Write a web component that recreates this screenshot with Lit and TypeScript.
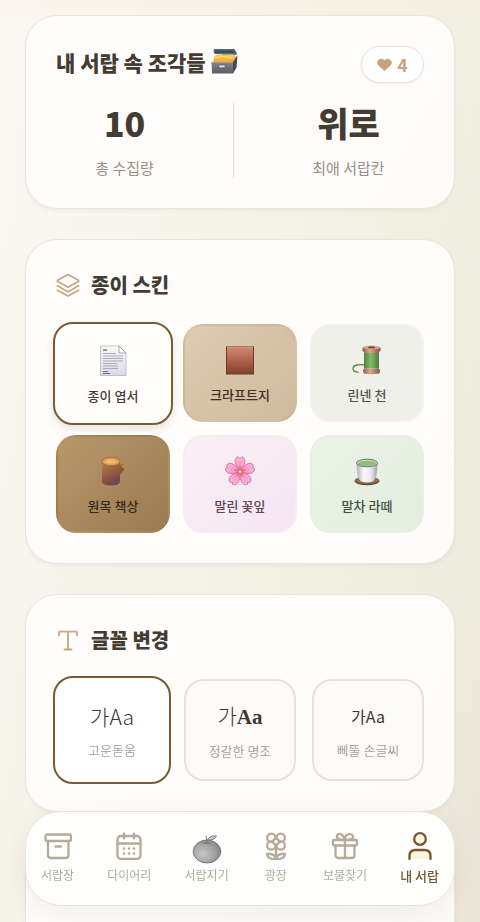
import { LitElement, html, css, svg } from "lit";
import { customElement, state } from "lit/decorators.js";
import { classMap } from "lit/directives/class-map.js";

const drawer = svg`
  <defs>
    <linearGradient id="d1" x1="0" y1="0" x2="0" y2="1"><stop offset="0" stop-color="#85858f"/><stop offset="1" stop-color="#5b5c65"/></linearGradient>
    <linearGradient id="d2" x1="0" y1="0" x2="0" y2="1"><stop offset="0" stop-color="#fbc95c"/><stop offset="1" stop-color="#f5a52b"/></linearGradient>
  </defs>
  <path d="M3 1h20.500L26 5.500 25 7 4 6 2.500 4.500z" fill="#526a7c"/>
  <path d="M4 2.500h19l1.500 2.500H4z" fill="#3c4c5a"/>
  <path d="M3.500 8L6 6.500h17L25 9l-2 6H2z" fill="url(#d2)"/>
  <path d="M4 9.500q8-2 18 0" fill="none" stroke="#ffe09a" stroke-width=".8"/>
  <path d="M11 7l2-1.200h4L18 7z" fill="#86b04b"/>
  <path d="M26.500 7l-1 12.500-3.500 6V14z" fill="#45464f"/>
  <path d="M.5 14H22v11.500H1z" fill="url(#d1)"/>
  <path d="M.5 14.300H22" stroke="#a4a5ad"/>
  <rect x="8" y="17" width="6" height="2.800" rx=".6" fill="#e8e8ec" stroke="#45464f" stroke-width=".6"/>`;

const paper = svg`
  <defs><linearGradient id="p1" x1="0" y1="0" x2="0" y2="1"><stop offset="0" stop-color="#fafafc"/><stop offset="1" stop-color="#d9d9e6"/></linearGradient></defs>
  <path d="M3.500 1h18.500l7 7v22.500h-25.500z" fill="url(#p1)" stroke="#b4b4c4" stroke-width=".8"/>
  <path d="M22 1v7h7z" fill="#fff" stroke="#9595a5" stroke-width=".8"/>
  <path d="M6 5h4" stroke="#555564" stroke-width="1.200"/>
  <path d="M6 8.500h13M6 11h20M6 13.500h20M6 16h20M6 18.500h14M6 21h15M6 23.500h15" stroke="#a2a2b0" stroke-width=".9"/>
  <path d="M6 26.500h5M6 28.500h7" stroke="#6d6d9b" stroke-width="1"/>`;

const kraft = svg`
  <defs><linearGradient id="k1" x1="0" y1="0" x2="0" y2="1"><stop offset="0" stop-color="#d08c73"/><stop offset=".4" stop-color="#b36a50"/><stop offset="1" stop-color="#80402c"/></linearGradient></defs>
  <rect x="2.500" y="3" width="27" height="27" fill="url(#k1)" stroke="#6f3a2a"/>
  <path d="M3 3.500h26" stroke="#eab49c" stroke-width=".6"/>`;

const thread = svg`
  <defs>
    <linearGradient id="t1"><stop offset="0" stop-color="#8c5a45"/><stop offset=".4" stop-color="#dca78d"/><stop offset="1" stop-color="#8a5541"/></linearGradient>
    <linearGradient id="t2"><stop offset="0" stop-color="#4f8040"/><stop offset=".45" stop-color="#86bc6b"/><stop offset="1" stop-color="#4a7c3a"/></linearGradient>
  </defs>
  <path d="M14 21C8 20 2.500 21 2 24c-.4 2.500 2 4.500 5.500 4" fill="none" stroke="#558a48" stroke-width="1.300"/>
  <path d="M13 24.500h15l1.300 2.500-1 2.500q-8 1.500-15.500 0L12 27z" fill="url(#t1)"/>
  <rect x="13" y="8" width="15" height="16.500" fill="url(#t2)"/>
  <path d="M11.500 3.500h18v3l-2 2.500H13.500l-2-2.500z" fill="url(#t1)"/>
  <ellipse cx="20.500" cy="3.500" rx="9" ry="1.900" fill="#d8a48d"/>
  <ellipse cx="20.500" cy="3.400" rx="3.500" ry=".9" fill="#644136"/>`;

const wood = svg`
  <defs><linearGradient id="w1" x1="0" y1="0" x2=".4" y2="1"><stop offset="0" stop-color="#b98048"/><stop offset=".5" stop-color="#9a6240"/><stop offset="1" stop-color="#74434e"/></linearGradient></defs>
  <path d="M20 16l3-6q3-2 4.500 1l-.5 4-5 6z" fill="#8a5733"/>
  <ellipse cx="26" cy="11.500" rx="1.900" ry="1.300" fill="#c98643" transform="rotate(30 26 11.500)"/>
  <path d="M5 6v21q1 3.500 9 3.500t9-3.500V6z" fill="url(#w1)"/>
  <ellipse cx="14" cy="6.500" rx="9" ry="4.200" fill="#e0a052" stroke="#a06c36" stroke-width=".9"/>
  <ellipse cx="14" cy="6.500" rx="5.500" ry="2" fill="#f0bb6c"/>`;

const petal = "M16 16.500C13.500 13.500 9.800 8 11.500 4q1-2.200 3-2.200l1.500 1.700 1.500-1.700q2 0 3 2.200C22.200 8 18.500 13.500 16 16.500z";
const blossom = svg`
  <defs><radialGradient id="b1" gradientUnits="userSpaceOnUse" cx="16" cy="16.500" r="15"><stop offset="0" stop-color="#ee5f9a"/><stop offset=".4" stop-color="#f99bc8"/><stop offset="1" stop-color="#fcb4dc"/></radialGradient></defs>
  ${[0, 72, 144, 216, 288].map(
    (a) => svg`<g transform="rotate(${a} 16 16.500)"><path d=${petal} fill="url(#b1)" stroke="#c9608f" stroke-width=".7"/><path d="M16 14v-3.500" stroke="#d9447f" stroke-width=".7"/></g>`
  )}
  <circle cx="16" cy="16.500" r="1.900" fill="#f7d78a" stroke="#b5503e" stroke-width=".6"/>`;

const tea = svg`
  <defs><linearGradient id="c1"><stop offset="0" stop-color="#a9aab4"/><stop offset=".35" stop-color="#fafafc"/><stop offset=".7" stop-color="#e6e6ee"/><stop offset="1" stop-color="#9b9caa"/></linearGradient></defs>
  <ellipse cx="16" cy="26" rx="12.500" ry="4.200" fill="#6b4637"/>
  <ellipse cx="16" cy="25.300" rx="12" ry="3.500" fill="#966852"/>
  <path d="M5.500 8l.5 8q.5 8 4 10.500 6 2 12 0Q25.500 24 26 16l.5-8z" fill="url(#c1)"/>
  <ellipse cx="16" cy="8" rx="10.500" ry="3.800" fill="#cfd6cf" stroke="#5f6b64" stroke-width=".9"/>
  <ellipse cx="16" cy="8.500" rx="9" ry="2.800" fill="#8dbf74"/>`;

const layers = svg`<g fill="none" stroke="currentColor" stroke-width="1.700" stroke-linejoin="round" stroke-linecap="round">
  <path d="M12 1.500 22.500 7.300q.6.500 0 1L12 14.200 1.500 8.300q-.6-.5 0-1z"/>
  <path d="M1.200 12.800 12 18.700l10.800-5.900M1.200 17.300 12 23l10.800-5.700"/></g>`;

const typeIcon = svg`<g fill="none" stroke="currentColor" stroke-width="1.800" stroke-linejoin="round" stroke-linecap="round">
  <path d="M3 7.500V5q0-1.300 1.300-1.300h15.400Q21 3.700 21 5v2.500M12 3.700v17.600M8.500 21.500h7"/></g>`;

const archive = svg`<rect x="1.500" y="2.500" width="25.500" height="6.500" rx="1.500"/><path d="M4 9v14q0 3 3 3h14.500q3 0 3-3V9M11.500 14.500h5.500"/>`;
const calendar = svg`<rect x="2.500" y="4" width="23" height="23" rx="3.500"/><path d="M2.500 11.500h23M9 1.500v5M19 1.500v5"/>
  <g fill="currentColor" stroke="none"><circle cx="9" cy="16.500" r="1.300"/><circle cx="14" cy="16.500" r="1.300"/><circle cx="19" cy="16.500" r="1.300"/><circle cx="9" cy="21.500" r="1.300"/><circle cx="14" cy="21.500" r="1.300"/><circle cx="19" cy="21.500" r="1.300"/></g>`;
const tangerine = svg`
  <defs><radialGradient id="o1" cx=".35" cy=".6" r=".7"><stop offset="0" stop-color="#c8c8c8"/><stop offset=".6" stop-color="#a2a2a2"/><stop offset="1" stop-color="#848484"/></radialGradient></defs>
  <g class="fine">
  <ellipse cx="15" cy="19.500" rx="13.800" ry="11.500" fill="url(#o1)" stroke="#747474"/>
  <path d="M14.500 11q.5-4-.5-7" fill="none" stroke="#707070"/>
  <path d="M15.500 8q2-5 9-4-2 4.500-9 4z" fill="#c9c9c9" stroke="#777"/>
  <path d="M11.500 11q3 1 6.500 0" fill="none" stroke="#6c6c6c"/></g>`;
const flower = svg`<circle cx="9.300" cy="5.800" r="4.200"/><circle cx="18.700" cy="5.800" r="4.200"/><circle cx="9.300" cy="13.500" r="4.200"/><circle cx="18.700" cy="13.500" r="4.200"/>
  <circle cx="14" cy="9.700" r="2.800" fill="#fff"/><path d="M14 16.500V27M14 27c-1-4-5-5.500-9-5.200 0 3.700 4 5.700 9 5.200 5 .5 9-1.500 9-5.200-4-.3-8 1.200-9 5.200"/>`;
const gift = svg`<rect x="2" y="8" width="24" height="5.500" rx="1.300"/><path d="M4.500 13.500V23q0 3 3 3h13q3 0 3-3v-9.500M14 8v18M14 8C8 8 5.500 6.500 6 4c.5-2.700 4-2.500 5.500-.7Q13.500 5.500 14 8c0-3 1.500-5.500 3.500-5.800C20 1.700 22 3 22 4.800 22 7.300 19 8 14 8"/>`;
const user = svg`<circle cx="14" cy="7" r="5.800" fill="#fff3e2"/><path d="M3.500 27v-3q0-6 6-6h9q6 0 6 6v3" fill="#fff3e2"/>`;

const SKINS = [
  { id: "postcard", label: "종이 엽서", art: paper },
  { id: "kraft", label: "크라프트지", art: kraft },
  { id: "linen", label: "린넨 천", art: thread },
  { id: "desk", label: "원목 책상", art: wood },
  { id: "petal", label: "말린 꽃잎", art: blossom },
  { id: "matcha", label: "말차 라떼", art: tea },
];
const FONTS = [
  { id: "gowun", label: "고운돋움" },
  { id: "myeongjo", label: "정갈한 명조" },
  { id: "hand", label: "삐뚤 손글씨" },
];
const TABS = [
  { id: "shelf", label: "서랍장", art: archive },
  { id: "diary", label: "다이어리", art: calendar },
  { id: "keeper", label: "서랍지기", art: tangerine },
  { id: "plaza", label: "광장", art: flower },
  { id: "treasure", label: "보물찾기", art: gift },
  { id: "mine", label: "내 서랍", art: user },
];

@customElement("app-root")
export class AppRoot extends LitElement {
  @state() skin = "postcard";
  @state() font = "gowun";

  static styles = css`
    :host {
      display: block;
      height: 100vh;
      font-family: "Noto Sans CJK KR", "Noto Sans", sans-serif;
      color: #443c32;
      background:
        linear-gradient(180deg, rgba(255, 236, 216, 0.25), rgba(255, 236, 216, 0) 24px),
        linear-gradient(105deg, #faf9f4 0%, #f4f1e6 50%, #eeebdf 85%, #ebe5d9 100%);
    }
    * { box-sizing: border-box; }
    main {
      height: 100%;
      overflow-y: auto;
      scrollbar-width: none;
      padding: 15px 25px 0;
      display: flex;
      flex-direction: column;
      gap: 30px;
    }
    .card {
      flex: none;
      padding: 30px;
      border: 1px solid #e9e5dd;
      border-radius: 32px;
      background: linear-gradient(120deg, #fffefd, #fdfcfa);
      box-shadow: 0 2px 4px rgba(110, 90, 60, 0.06);
    }
    .more { min-height: 160px; }
    .top { display: flex; justify-content: space-between; align-items: center; height: 37px; }
    h1, h2, p { margin: 0; }
    h1, h2 {
      display: flex;
      align-items: center;
      font-weight: 900;
      line-height: 30px;
    }
    h1 { gap: 5px; font-size: 21px; padding-bottom: 6px; }
    h2 { gap: 11px; font-size: 20px; margin-bottom: 24px; }
    .drawer { width: 28px; height: 28px; }
    .mark { width: 24px; height: 24px; color: #c9a67c; }
    .likes {
      display: flex;
      align-items: center;
      justify-content: center;
      gap: 5px;
      width: 63px;
      height: 37px;
      border: 1px solid #e6e2dc;
      border-radius: 20px;
      background: #fff;
      color: #c8a27a;
      font-size: 17px;
      font-weight: 700;
      line-height: 20px;
      box-shadow: 0 1px 2px rgba(110, 90, 60, 0.08);
    }
    .heart { width: 15px; height: 15px; }
    .stats { display: flex; justify-content: space-around; margin-top: 20px; height: 75px; }
    .stat { display: flex; flex-direction: column; align-items: center; gap: 15px; }
    .value { font-size: 34px; font-weight: 900; line-height: 40px; }
    .caption { font-size: 15px; line-height: 20px; color: #9a9186; }
    .rule { width: 1px; background: #e2ded8; }
    .grid { display: grid; grid-template-columns: repeat(3, 1fr); gap: 13px; }
    .fonts { gap: 16px; }
    button { font: inherit; color: inherit; cursor: pointer; }
    .tile {
      display: flex;
      flex-direction: column;
      align-items: center;
      justify-content: center;
      padding: 0;
      border-radius: 20px;
    }
    .skin {
      height: 98px;
      padding-top: 3px;
      gap: 9px;
      border: 2px solid rgba(140, 110, 70, 0.08);
      font-size: 13px;
      font-weight: 500;
      line-height: 20px;
    }
    .skin svg { width: 32px; height: 32px; }
    .postcard { background: #fffefb; }
    .kraft { background: linear-gradient(135deg, #decbb2, #d0ba9c); color: #403021; }
    .linen { background: #f0f0eb; border-color: #f2f2ee; color: #54524c; }
    .desk { background: linear-gradient(135deg, #b8976b, #9b7a52); color: #38291a; }
    .petal { background: linear-gradient(135deg, #faf0f6, #f5e6f1); border-color: #f8ecf4; color: #5e4650; }
    .matcha { background: linear-gradient(135deg, #ebf3e8, #e3eedd); border-color: #e6f1e3; color: #43523f; }
    .face { height: 102px; gap: 9px; border: 2px solid #e8e2da; background: #fdfbf8; }
    .tile.on { border: 2px solid #7d5a34; }
    .skin.on { height: 103px; margin: -2px -3px -3px; box-shadow: 0 4px 8px rgba(90, 70, 40, 0.14); }
    .face.on { height: 108px; margin: -3px; background: #fff; }
    .sample { font-size: 21px; line-height: 30px; font-weight: 300; color: #3c3834; }
    .myeongjo .latin { font-family: "Liberation Serif", serif; font-weight: 700; }
    .hand .sample { font-size: 16px; font-weight: 400; }
    .name { font-size: 13px; line-height: 20px; font-weight: 300; color: #83796c; }
    nav {
      position: fixed;
      left: 25px;
      right: 25px;
      bottom: 16px;
      display: flex;
      justify-content: space-between;
      height: 95px;
      padding: 20px 15px 0;
      border: 1px solid #e9e4da;
      border-radius: 36px;
      background: #fefefd;
      box-shadow: 0 8px 30px rgba(100, 80, 50, 0.09);
    }
    .tab {
      display: flex;
      flex-direction: column;
      align-items: center;
      gap: 5px;
      color: #b5ab9b;
      text-decoration: none;
      font-size: 12px;
      line-height: 20px;
    }
    .tab svg {
      width: 28px;
      height: 28px;
      fill: none;
      stroke: currentColor;
      stroke-width: 2.3;
      stroke-linecap: round;
      stroke-linejoin: round;
    }
    .tab .fruit { width: 30px; height: 32px; margin-bottom: -4px; }
    .fine { stroke-width: 0.9; }
    .mine { color: #7b5730; font-weight: 500; font-size: 13px; gap: 6px; }
  `;

  render() {
    return html`
      <main>
        <section class="card">
          <div class="top">
            <h1>내 서랍 속 조각들<svg class="drawer" viewBox="0 0 28 28" aria-hidden="true">${drawer}</svg></h1>
            <span class="likes"><svg class="heart" viewBox="0 0 16 16" aria-hidden="true"><path fill="currentColor" stroke="currentColor" stroke-linejoin="round" d="M8 14.500 2 9C-.5 6.500.8 2.300 4.500 2.300 6 2.300 7.200 3 8 4c.8-1 2-1.700 3.500-1.700C15.200 2.300 16.500 6.500 14 9z"/></svg>4</span>
          </div>
          <div class="stats">
            <div class="stat"><p class="value">10</p><p class="caption">총 수집량</p></div>
            <div class="rule"></div>
            <div class="stat"><p class="value">위로</p><p class="caption">최애 서랍칸</p></div>
          </div>
        </section>

        <section class="card">
          <h2><svg class="mark" viewBox="0 0 24 24" aria-hidden="true">${layers}</svg>종이 스킨</h2>
          <div class="grid">
            ${SKINS.map(
              (s) => html`<button
                class=${classMap({ tile: true, skin: true, [s.id]: true, on: this.skin === s.id })}
                aria-pressed=${this.skin === s.id}
                @click=${() => (this.skin = s.id)}
              ><svg viewBox="0 0 32 32" aria-hidden="true">${s.art}</svg><span>${s.label}</span></button>`
            )}
          </div>
        </section>

        <section class="card">
          <h2><svg class="mark" viewBox="0 0 24 24" aria-hidden="true">${typeIcon}</svg>글꼴 변경</h2>
          <div class="grid fonts">
            ${FONTS.map(
              (f) => html`<button
                class=${classMap({ tile: true, face: true, [f.id]: true, on: this.font === f.id })}
                aria-pressed=${this.font === f.id}
                @click=${() => (this.font = f.id)}
              ><span class="sample">가<span class="latin">Aa</span></span><span class="name">${f.label}</span></button>`
            )}
          </div>
        </section>

        <section class="card more"></section>
      </main>

      <nav>
        ${TABS.map(
          (t) => html`<a href="#${t.id}" class=${classMap({ tab: true, mine: t.id === "mine" })}>
            ${t.id === "keeper"
              ? html`<svg class="fruit" viewBox="0 0 30 32" aria-hidden="true">${t.art}</svg>`
              : html`<svg viewBox="0 0 28 28" aria-hidden="true">${t.art}</svg>`}
            <span>${t.label}</span>
          </a>`
        )}
      </nav>
    `;
  }
}
